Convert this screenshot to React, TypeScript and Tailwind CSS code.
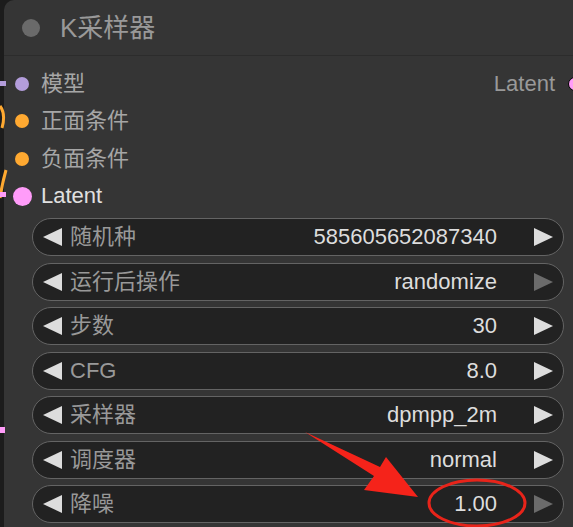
import React from "react";

const FONT = '"Liberation Sans", "Noto Sans CJK SC", sans-serif';

interface WidgetProps {
  label: string;
  value: string;
  rightDisabled?: boolean;
}

function Arrow({ dir, dim }: { dir: "left" | "right"; dim?: boolean }) {
  return (
    <svg width="19" height="18" viewBox="0 0 19 18" className="shrink-0">
      <polygon
        points={dir === "left" ? "19,0 0,9 19,18" : "0,0 19,9 0,18"}
        fill={dim ? "#6b6b6b" : "#dddddd"}
      />
    </svg>
  );
}

function Widget({ label, value, rightDisabled }: WidgetProps) {
  return (
    <div className="flex items-center h-[38px] rounded-full bg-[#222222] border-[1.5px] border-[#646464] pl-[10px] pr-[10px]">
      <Arrow dir="left" />
      <span className="ml-[8px] text-[22px] text-[#999999] leading-none">{label}</span>
      <span className="ml-auto mr-[37px] text-[22px] text-[#dddddd] leading-none">{value}</span>
      <Arrow dir="right" dim={rightDisabled} />
    </div>
  );
}

function InputRow({ label, color, big, bright }: { label: string; color: string; big?: boolean; bright?: boolean }) {
  return (
    <div className="flex items-center h-[37.5px] pl-[8px]">
      <div className="w-[20px] flex justify-center">
        <span
          className={big ? "w-[19px] h-[19px] rounded-full" : "w-[14px] h-[14px] rounded-full"}
          style={{ backgroundColor: color }}
        />
      </div>
      <span className={`ml-[9px] text-[22px] leading-none ${bright ? "text-[#e0e0e0]" : "text-[#a6a6a6]"}`}>
        {label}
      </span>
    </div>
  );
}

export default function App() {
  const widgets: WidgetProps[] = [
    { label: "随机种", value: "585605652087340" },
    { label: "运行后操作", value: "randomize", rightDisabled: true },
    { label: "步数", value: "30" },
    { label: "CFG", value: "8.0" },
    { label: "采样器", value: "dpmpp_2m" },
    { label: "调度器", value: "normal" },
    { label: "降噪", value: "1.00", rightDisabled: true },
  ];

  return (
    <div className="relative w-[573px] h-[527px] overflow-hidden bg-[#1c1c1c]" style={{ fontFamily: FONT }}>
      {/* wires behind the node */}
      <svg className="absolute left-0 top-0" width="8" height="527">
        <rect x="0" y="81" width="6" height="5" fill="#b39ddb" />
        <path d="M0 106 Q6 114 2 128" stroke="#ffa931" strokeWidth="3" fill="none" />
        <path d="M6 170 Q2 184 0 198" stroke="#ffa931" strokeWidth="3" fill="none" />
        <rect x="0" y="192" width="6" height="5" fill="#ff9cf9" />
        <rect x="0" y="427" width="5" height="6" fill="#ff9cf9" />
      </svg>

      <div className="ml-[4px] h-full bg-[#353535] rounded-tl-[10px] flex flex-col">
        {/* title */}
        <div className="h-[56px] shrink-0 flex items-center pl-[18px] border-b border-[#2c2c2c]">
          <span className="w-[18px] h-[18px] rounded-full bg-[#6a6a6a]" />
          <span className="ml-[20px] text-[26px] text-[#999999] leading-none">K采样器</span>
        </div>

        {/* slots */}
        <div className="relative pt-[9px] pb-[3px]">
          <InputRow label="模型" color="#b39ddb" />
          <InputRow label="正面条件" color="#ffa931" />
          <InputRow label="负面条件" color="#ffa931" />
          <InputRow label="Latent" color="#ff9cf9" big bright />
          <div className="absolute right-0 top-[9px] h-[37.5px] flex items-center">
            <span className="text-[22px] text-[#999999] leading-none mr-[13px]">Latent</span>
            <span className="w-[14px] h-[14px] rounded-full bg-[#ff9cf9] border-[1.5px] border-black -mr-[9px]" />
          </div>
        </div>

        {/* widgets */}
        <div className="flex flex-col gap-[6.5px] pl-[28px] pr-[9px]">
          {widgets.map((w) => (
            <Widget key={w.label} {...w} />
          ))}
        </div>
      </div>

      {/* annotation */}
      <svg className="absolute left-0 top-0 pointer-events-none" width="573" height="527">
        <polygon points="305,432 380,467 386,457 418,497 364,490 374,476" fill="#f5231a" />
        <ellipse cx="477" cy="503" rx="48" ry="23" fill="none" stroke="#e8241a" strokeWidth="3" />
      </svg>
    </div>
  );
}
